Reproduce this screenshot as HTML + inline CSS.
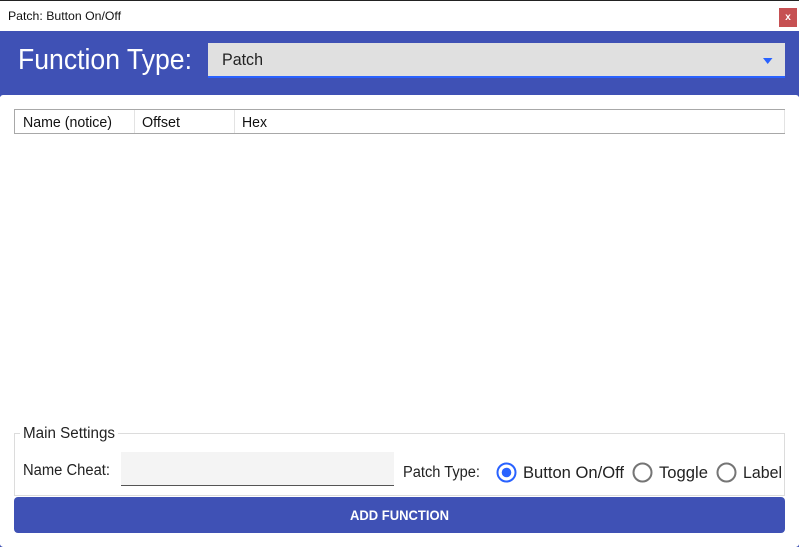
<!DOCTYPE html>
<html><head><meta charset="utf-8"><style>
html,body{margin:0;padding:0;width:799px;height:547px;overflow:hidden;background:#fff}
svg{display:block;position:absolute;left:0;top:0}
text{font-family:"Liberation Sans",Arial,sans-serif}
</style></head><body>
<svg width="799" height="547" viewBox="0 0 799 547" xmlns="http://www.w3.org/2000/svg">
<rect width="799" height="547" fill="#fff"/>
<rect width="799" height="1" fill="#222"/>
<text x="8" y="20" font-size="12" fill="#111" textLength="113" lengthAdjust="spacingAndGlyphs">Patch: Button On/Off</text>
<rect x="779" y="8" width="18" height="19" fill="#c65052"/>
<text x="788" y="20" font-size="10" font-weight="bold" style="font-family:'Liberation Mono',monospace" fill="#fff" text-anchor="middle">x</text>
<rect x="0" y="31" width="799" height="66" fill="#3f51b5"/>
<rect x="0" y="95" width="799" height="452" rx="3" fill="#fff"/>
<path d="M0 547V544Q0 546 3 547ZM799 547V544Q799 546 796 547Z" fill="#3f51b5"/>
<text x="18" y="69" font-size="29" fill="#fff" textLength="174" lengthAdjust="spacingAndGlyphs">Function Type:</text>
<rect x="208" y="43" width="577" height="33" fill="#e0e0e0"/>
<rect x="208" y="76" width="577" height="2" fill="#2962ff"/>
<text x="222" y="65" font-size="17" fill="#222" textLength="41" lengthAdjust="spacingAndGlyphs">Patch</text>
<path d="M763 58H772.500L767.700 64Z" fill="#2962ff"/>
<rect x="14.500" y="109.500" width="770" height="24" fill="#fff" stroke="#e3e3e3"/>
<rect x="14" y="109" width="771" height="1" fill="#a8a8a8"/>
<rect x="14" y="133" width="771" height="1" fill="#a8a8a8"/>
<rect x="14" y="109" width="1" height="25" fill="#a8a8a8"/>
<rect x="134" y="110" width="1" height="23" fill="#e3e3e3"/>
<rect x="234" y="110" width="1" height="23" fill="#e3e3e3"/>
<text x="23" y="127" font-size="15" fill="#111" textLength="89" lengthAdjust="spacingAndGlyphs">Name (notice)</text>
<text x="142" y="127" font-size="15" fill="#111" textLength="38" lengthAdjust="spacingAndGlyphs">Offset</text>
<text x="242" y="127" font-size="15" fill="#111" textLength="25" lengthAdjust="spacingAndGlyphs">Hex</text>
<path d="M20 433.500H14.500V495.500H784.500V433.500H118" fill="none" stroke="#dcdcdc"/>
<text x="23" y="438" font-size="15.500" fill="#222" textLength="92" lengthAdjust="spacingAndGlyphs">Main Settings</text>
<text x="23" y="475" font-size="15.500" fill="#222" textLength="87" lengthAdjust="spacingAndGlyphs">Name Cheat:</text>
<rect x="121" y="452" width="273" height="33" fill="#f4f4f4"/>
<rect x="121" y="485" width="273" height="1" fill="#555"/>
<text x="403" y="477" font-size="15.500" fill="#222" textLength="77" lengthAdjust="spacingAndGlyphs">Patch Type:</text>
<circle cx="506.500" cy="472.500" r="9" fill="#fff" stroke="#2962ff" stroke-width="2"/>
<circle cx="506.500" cy="472.500" r="4.800" fill="#2962ff"/>
<text x="523" y="478" font-size="17" fill="#222" textLength="101" lengthAdjust="spacingAndGlyphs">Button On/Off</text>
<circle cx="642.500" cy="472.500" r="9" fill="#fff" stroke="#757575" stroke-width="2"/>
<text x="659" y="478" font-size="17" fill="#222" textLength="49" lengthAdjust="spacingAndGlyphs">Toggle</text>
<circle cx="726.500" cy="472.500" r="9" fill="#fff" stroke="#757575" stroke-width="2"/>
<text x="743" y="478" font-size="17" fill="#222" textLength="39" lengthAdjust="spacingAndGlyphs">Label</text>
<rect x="14" y="497" width="771" height="36" rx="4" fill="#3f51b5"/>
<text x="350" y="520" font-size="13.500" font-weight="bold" fill="#fff" textLength="99" lengthAdjust="spacingAndGlyphs">ADD FUNCTION</text>
</svg>
</body></html>
